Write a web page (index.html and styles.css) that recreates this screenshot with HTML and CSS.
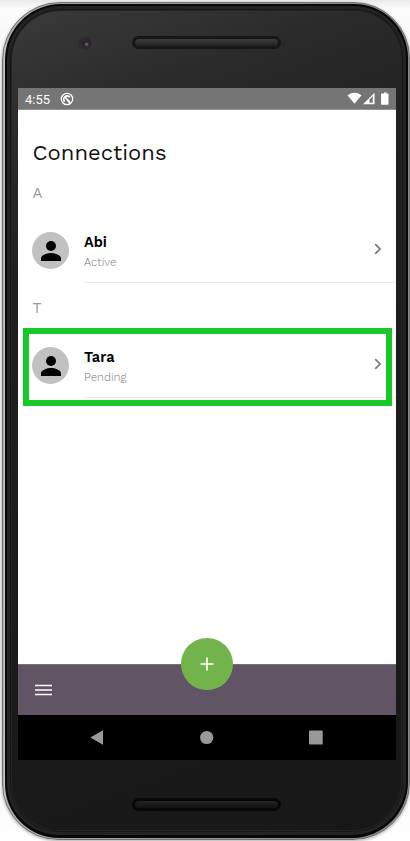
FILE: index.html
```html
<!DOCTYPE html>
<html lang="en">
<head>
<meta charset="utf-8">
<title>Connections</title>
<link rel="stylesheet" href="styles.css">
</head>
<body>
<div class="phone">
  <div class="bezel">
    <header class="top">
      <span class="camera"></span>
      <span class="speaker"></span>
    </header>
    <main class="screen">
      <div class="status">
        <span class="time">4:55</span>
        <svg class="status-app" viewBox="0 0 14 14"><circle cx="7" cy="7" r="5.7" fill="none" stroke="#fff" stroke-width="1.3"/><path d="M4.600 9.600A3.400 3.400 0 0 1 9.700 5.100M5 5l4.800 5" fill="none" stroke="#fff" stroke-width="1.700"/><path d="m7 8 3 3" stroke="#fff" stroke-width="1.500"/></svg>
        <svg class="status-icons" viewBox="0 0 42 14"><path d="M.5 3.300Q7.500-1.600 14.500 3.300L7.500 11.800Z" fill="#fff"/><path d="M16 12.200 27.500.8v11.400Z" fill="#fff"/><path d="M22.500 7.400 25.800 4v6.700h-3.300Z" fill="#777"/><path d="M35.500 1.500H37V.5h2.500v1H41q.5 0 .5.5v10q0 .7-.7.700h-6q-.7 0-.7-.7V2q0-.5.5-.5Z" fill="#fff"/></svg>
      </div>
      <section class="content">
        <h1>Connections</h1>
        <h2>A</h2>
        <div class="row">
          <span class="avatar"><svg viewBox="0 0 20 20"><circle cx="10" cy="5" r="5"/><path d="M0 20v-2.700C0 14 6.500 12 10 12s10 2 10 5.300V20Z"/></svg></span>
          <div class="entry">
            <div><div class="name">Abi</div><div class="state">Active</div></div>
            <svg class="chevron" viewBox="0 0 8 12"><path d="m1.200 1.200 4.800 4.800-4.800 4.800"/></svg>
          </div>
        </div>
        <h2>T</h2>
        <div class="row">
          <span class="avatar"><svg viewBox="0 0 20 20"><circle cx="10" cy="5" r="5"/><path d="M0 20v-2.700C0 14 6.500 12 10 12s10 2 10 5.300V20Z"/></svg></span>
          <div class="entry">
            <div><div class="name">Tara</div><div class="state">Pending</div></div>
            <svg class="chevron" viewBox="0 0 8 12"><path d="m1.200 1.200 4.800 4.800-4.800 4.800"/></svg>
          </div>
          <span class="highlight"></span>
        </div>
      </section>
      <div class="toolbar">
        <svg class="menu" viewBox="0 0 17 12"><path d="M0 1.500h17M0 6h17M0 10.500h17"/></svg>
        <span class="fab"><svg viewBox="0 0 14 14"><path d="M7 .5v13M.5 7h13"/></svg></span>
      </div>
      <nav class="system">
        <svg viewBox="0 0 14 16"><path d="M13 .2v14.600L.3 7.500Z"/></svg>
        <svg viewBox="0 0 14 16"><circle cx="6.700" cy="7.500" r="6.600"/></svg>
        <svg viewBox="0 0 14 16"><rect x="0" y=".5" width="13.700" height="14" rx=".7"/></svg>
      </nav>
    </main>
    <footer class="bottom"><span class="speaker"></span></footer>
  </div>
</div>
</body>
</html>
```
FILE: styles.css
```css
* { box-sizing: border-box; }
body {
  margin: 0;
  height: 841px;
  padding: 2px 0 0 2px;
  overflow: hidden;
  background: linear-gradient(#e8e9ea, #fcfcfd 9px, #f3f4f5 80px, #e9eaeb 700px, #fafafa 800px, #fff);
  font-family: "Liberation Sans", sans-serif;
}
svg { display: block; }
.phone {
  width: 408px;
  height: 838px;
  padding: 1px;
  border: 1px solid #707070;
  border-radius: 58px 56px 57px 56px;
  background: linear-gradient(90deg, #aaa 0, #c9c9c9 2px, #aaa 4px, #888 100%);
  box-shadow: 0 1px 3px #aaa;
}
.bezel {
  height: 834px;
  border: 2px solid #080808;
  border-width: 2px 2px 3px;
  border-radius: 56px 54px 56px 54px;
  margin-left: 1px;
  padding-left: 11px;
  background: linear-gradient(160deg, #3b3b3b 0, #2a2a2a 130px, #1f1f1f 270px, #1d1d1d 500px, #171717 100%);
  box-shadow: inset 0 0 0 3px #232323, inset 0 0 0 4px #171717, inset 0 0 0 5px #242424;
}
.top {
  display: flex;
  height: 82px;
  padding: 30px 0 0 60px;
}
.camera {
  width: 14px;
  height: 14px;
  border-radius: 50%;
  border: 1px solid #303030;
  background: radial-gradient(circle at 64% 61%, #80505d 0 1px, #302b3b 2px, #262530 4px, #2c2c2c 6px);
}
.speaker {
  width: 149px;
  height: 13px;
  margin-left: 40px;
  border: 3px solid #161616;
  border-radius: 7px;
  background: linear-gradient(#3d3d3d, #292929 70%, #202020) padding-box;
}
.screen {
  display: flex;
  flex-direction: column;
  width: 378px;
  height: 672px;
  background: #fff;
}
.status {
  display: flex;
  align-items: center;
  height: 22px;
  padding: 0 7px;
  background: #757575;
  border-bottom: 1px solid #929292;
}
.time { font: 13px Roboto, sans-serif; color: #fff; width: 35px; padding-top: 1px; }
.status-app { width: 14px; height: 14px; }
.status-icons { width: 42px; height: 14px; margin-left: auto; }
.content {
  flex: 1;
  font-family: "Work Sans", Inter, sans-serif;
}
h1 {
  margin: 28px 0 0 14.500px;
  font-size: 22px;
  font-weight: 400;
  line-height: 30px;
  color: #111;
}
h2 {
  margin: 14px 0 0 14.500px;
  font-size: 15px;
  font-weight: 400;
  line-height: 22px;
  color: #999;
}
.row {
  position: relative;
  display: flex;
  height: 65px;
  margin-top: 14px;
  padding-left: 14px;
}
.avatar {
  width: 37px;
  height: 37px;
  margin: 13.500px 15px 0 0;
  padding: 9px 8px 8px 9px;
  border-radius: 50%;
  background: #c1c1c1;
}
.avatar svg { width: 20px; height: 20px; }
.entry {
  display: flex;
  flex: 1;
  justify-content: space-between;
  border-bottom: 1px solid #ececec;
}
.name {
  margin-top: 15px;
  font-size: 14.500px;
  font-weight: 600;
  line-height: 20px;
  color: #000;
}
.state {
  margin-top: 1px;
  font-size: 11.500px;
  font-weight: 300;
  line-height: 16px;
  color: #777;
}
.chevron { width: 8px; height: 12px; margin: 25px 14px 0 0; fill: none; stroke: #777; stroke-width: 1.700; }
.highlight {
  position: absolute;
  left: 5px;
  top: -5px;
  width: 369px;
  height: 78px;
  border: 6px solid #16c928;
}
.toolbar {
  position: relative;
  height: 51px;
  padding: 19px 17px;
  background: #615565;
  border-top: 1px solid #786e7b;
}
.menu { width: 17px; height: 12px; stroke: #fff; stroke-width: 1.600; }
.fab {
  position: absolute;
  left: 163px;
  top: -27px;
  width: 51.500px;
  height: 51.500px;
  padding: 19px;
  border-radius: 50%;
  background: #72b34c;
}
.fab svg { width: 14px; height: 14px; stroke: #fff; stroke-width: 1.700; }
.system {
  display: flex;
  justify-content: space-between;
  align-items: center;
  height: 45px;
  padding: 0 73px 0 72px;
  background: #000;
  fill: #999;
}
.system svg { width: 14px; height: 16px; }
.bottom { padding: 38px 0 0 74px; }
.bottom .speaker { display: block; border-color: #080808; background: linear-gradient(#232323, #121212) padding-box; }
```
